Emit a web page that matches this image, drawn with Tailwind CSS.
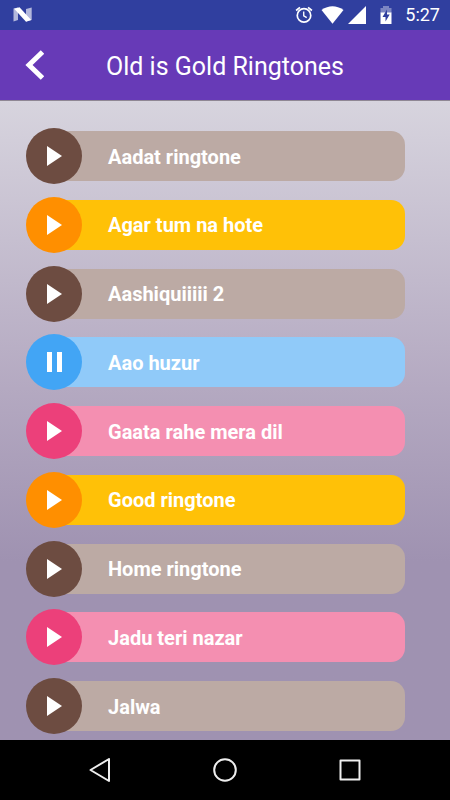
<!DOCTYPE html>
<html lang="en">
<head>
<meta charset="utf-8">
<meta name="viewport" content="width=device-width, initial-scale=1">
<title>Old is Gold Ringtones</title>
<script src="https://cdn.jsdelivr.net/npm/@tailwindcss/browser@4"></script>
</head>
<body class="flex min-h-screen flex-col bg-black font-['Roboto',sans-serif] text-white">
  <!-- Status bar -->
  <div class="flex h-[30px] shrink-0 items-center justify-between bg-[#303f9f] pr-[10px] pl-[13px]">
    <svg class="h-4 w-5" viewBox="0 0 20 16" aria-hidden="true">
      <path d="M.5 1.500 5 .5V13L.5 14.500Z" fill="#b3b8dc"/>
      <path d="M13 2 18.700 .5V13L13 14.500Z" fill="#b3b8dc"/>
      <path d="M1.200 1.700 6.500 .3 18.200 13 13 14.800Z" fill="#fff"/>
    </svg>
    <div class="flex items-center">
      <svg class="mr-2 h-5 w-[18px]" viewBox="0 0 20 20" fill="none" stroke="#fff" aria-hidden="true">
        <circle cx="10" cy="10.500" r="7.500" stroke-width="1.900"/>
        <path d="M9.700 6V11L13 13" stroke-width="1.500"/>
        <path d="M1.200 5 5.500 1.500M18.800 5 14.500 1.500" stroke-width="1.900"/>
      </svg>
      <svg class="mr-1 h-5 w-[23px]" viewBox="0 0 23 20" fill="#fff" aria-hidden="true"><path d="M.5 5Q11.500-2.500 22.500 5L11.500 18.800Z"/></svg>
      <svg class="mr-3 h-5 w-[19px]" viewBox="0 0 19 20" fill="#fff" aria-hidden="true"><path d="M18 1V19H0Z"/></svg>
      <svg class="mr-3 h-5 w-[14px]" viewBox="0 0 14 20" aria-hidden="true">
        <path d="M1.500 3H4V1H10V3H12.500V8H1.500Z" fill="#7c85c2"/>
        <path d="M1.500 7.500H12.500V19H1.500Z" fill="#fff"/>
        <path d="M8 4.500 3.500 12H6.500V16.500L10.700 9.500H8Z" fill="#303f9f"/>
      </svg>
      <time class="text-[18px] leading-5">5:27</time>
    </div>
  </div>

  <!-- App bar -->
  <header class="grid h-[71px] shrink-0 grid-cols-[80px_1fr_80px] items-center border-b border-[#8f8794] bg-[#673ab7]">
    <a href="#" aria-label="Back" class="ml-[22px] flex h-10 w-6 items-center justify-center">
      <svg class="h-[30px] w-5" viewBox="0 0 20 30" fill="none" stroke="#fff" stroke-width="5" aria-hidden="true"><path d="M18.500 2 5 15 18.500 28"/></svg>
    </a>
    <h1 class="pt-[3px] text-center text-[25px] leading-8 whitespace-nowrap">Old is Gold Ringtones</h1>
  </header>

  <!-- Ringtone list -->
  <main class="flex flex-1 bg-linear-to-b from-[#d7d4de] via-[#b4a9c1] via-45% to-[#9f92b1] to-72% pt-[27px] pr-[45px] pb-[6px] pl-[26px]">
    <ul class="flex flex-1 flex-col justify-between gap-3">
      <li class="flex items-center">
        <button aria-label="Play Aadat ringtone" class="z-10 flex size-14 shrink-0 items-center justify-center rounded-full bg-[#6d4c41]"><svg class="size-5" viewBox="0 0 20 20" fill="#fff" aria-hidden="true"><path d="M3 0V20L18 10Z"/></svg></button>
        <span class="-ml-7 flex h-[50px] flex-1 items-center rounded-r-[14px] bg-[#bcaaa4] pt-px pl-[54px] text-[20px] leading-6 font-bold">Aadat ringtone</span>
      </li>
      <li class="flex items-center">
        <button aria-label="Play Agar tum na hote" class="z-10 flex size-14 shrink-0 items-center justify-center rounded-full bg-[#ff8f00]"><svg class="size-5" viewBox="0 0 20 20" fill="#fff" aria-hidden="true"><path d="M3 0V20L18 10Z"/></svg></button>
        <span class="-ml-7 flex h-[50px] flex-1 items-center rounded-r-[14px] bg-[#ffc107] pt-px pl-[54px] text-[20px] leading-6 font-bold">Agar tum na hote</span>
      </li>
      <li class="flex items-center">
        <button aria-label="Play Aashiquiiiii 2" class="z-10 flex size-14 shrink-0 items-center justify-center rounded-full bg-[#6d4c41]"><svg class="size-5" viewBox="0 0 20 20" fill="#fff" aria-hidden="true"><path d="M3 0V20L18 10Z"/></svg></button>
        <span class="-ml-7 flex h-[50px] flex-1 items-center rounded-r-[14px] bg-[#bcaaa4] pt-px pl-[54px] text-[20px] leading-6 font-bold">Aashiquiiiii 2</span>
      </li>
      <li class="flex items-center">
        <button aria-label="Pause Aao huzur" class="z-10 flex size-14 shrink-0 items-center justify-center rounded-full bg-[#42a5f5]"><svg class="size-5" viewBox="0 0 20 20" fill="#fff" aria-hidden="true"><path d="M3 0H8V20H3ZM13 0H18V20H13Z"/></svg></button>
        <span class="-ml-7 flex h-[50px] flex-1 items-center rounded-r-[14px] bg-[#90caf9] pt-px pl-[54px] text-[20px] leading-6 font-bold">Aao huzur</span>
      </li>
      <li class="flex items-center">
        <button aria-label="Play Gaata rahe mera dil" class="z-10 flex size-14 shrink-0 items-center justify-center rounded-full bg-[#ec407a]"><svg class="size-5" viewBox="0 0 20 20" fill="#fff" aria-hidden="true"><path d="M3 0V20L18 10Z"/></svg></button>
        <span class="-ml-7 flex h-[50px] flex-1 items-center rounded-r-[14px] bg-[#f48fb1] pt-px pl-[54px] text-[20px] leading-6 font-bold">Gaata rahe mera dil</span>
      </li>
      <li class="flex items-center">
        <button aria-label="Play Good ringtone" class="z-10 flex size-14 shrink-0 items-center justify-center rounded-full bg-[#ff8f00]"><svg class="size-5" viewBox="0 0 20 20" fill="#fff" aria-hidden="true"><path d="M3 0V20L18 10Z"/></svg></button>
        <span class="-ml-7 flex h-[50px] flex-1 items-center rounded-r-[14px] bg-[#ffc107] pt-px pl-[54px] text-[20px] leading-6 font-bold">Good ringtone</span>
      </li>
      <li class="flex items-center">
        <button aria-label="Play Home ringtone" class="z-10 flex size-14 shrink-0 items-center justify-center rounded-full bg-[#6d4c41]"><svg class="size-5" viewBox="0 0 20 20" fill="#fff" aria-hidden="true"><path d="M3 0V20L18 10Z"/></svg></button>
        <span class="-ml-7 flex h-[50px] flex-1 items-center rounded-r-[14px] bg-[#bcaaa4] pt-px pl-[54px] text-[20px] leading-6 font-bold">Home ringtone</span>
      </li>
      <li class="flex items-center">
        <button aria-label="Play Jadu teri nazar" class="z-10 flex size-14 shrink-0 items-center justify-center rounded-full bg-[#ec407a]"><svg class="size-5" viewBox="0 0 20 20" fill="#fff" aria-hidden="true"><path d="M3 0V20L18 10Z"/></svg></button>
        <span class="-ml-7 flex h-[50px] flex-1 items-center rounded-r-[14px] bg-[#f48fb1] pt-px pl-[54px] text-[20px] leading-6 font-bold">Jadu teri nazar</span>
      </li>
      <li class="flex items-center">
        <button aria-label="Play Jalwa" class="z-10 flex size-14 shrink-0 items-center justify-center rounded-full bg-[#6d4c41]"><svg class="size-5" viewBox="0 0 20 20" fill="#fff" aria-hidden="true"><path d="M3 0V20L18 10Z"/></svg></button>
        <span class="-ml-7 flex h-[50px] flex-1 items-center rounded-r-[14px] bg-[#bcaaa4] pt-px pl-[54px] text-[20px] leading-6 font-bold">Jalwa</span>
      </li>
    </ul>
  </main>

  <!-- System navigation -->
  <nav aria-label="System" class="grid h-[60px] shrink-0 grid-cols-3 items-center bg-black px-[38px]">
    <button aria-label="Back" class="flex h-12 items-center justify-center"><svg class="size-6" viewBox="0 0 24 24" fill="none" stroke="#eee" stroke-width="2" stroke-linejoin="round" aria-hidden="true"><path d="M21 1V23L2.500 12Z"/></svg></button>
    <button aria-label="Home" class="flex h-12 items-center justify-center"><svg class="size-6" viewBox="0 0 24 24" fill="none" stroke="#eee" stroke-width="2" aria-hidden="true"><circle cx="12" cy="12" r="10.800"/></svg></button>
    <button aria-label="Recent apps" class="flex h-12 items-center justify-center"><svg class="size-6" viewBox="0 0 24 24" fill="none" stroke="#eee" stroke-width="2" stroke-linejoin="round" aria-hidden="true"><path d="M2.500 2.500H21.500V21.500H2.500Z"/></svg></button>
  </nav>
</body>
</html>
